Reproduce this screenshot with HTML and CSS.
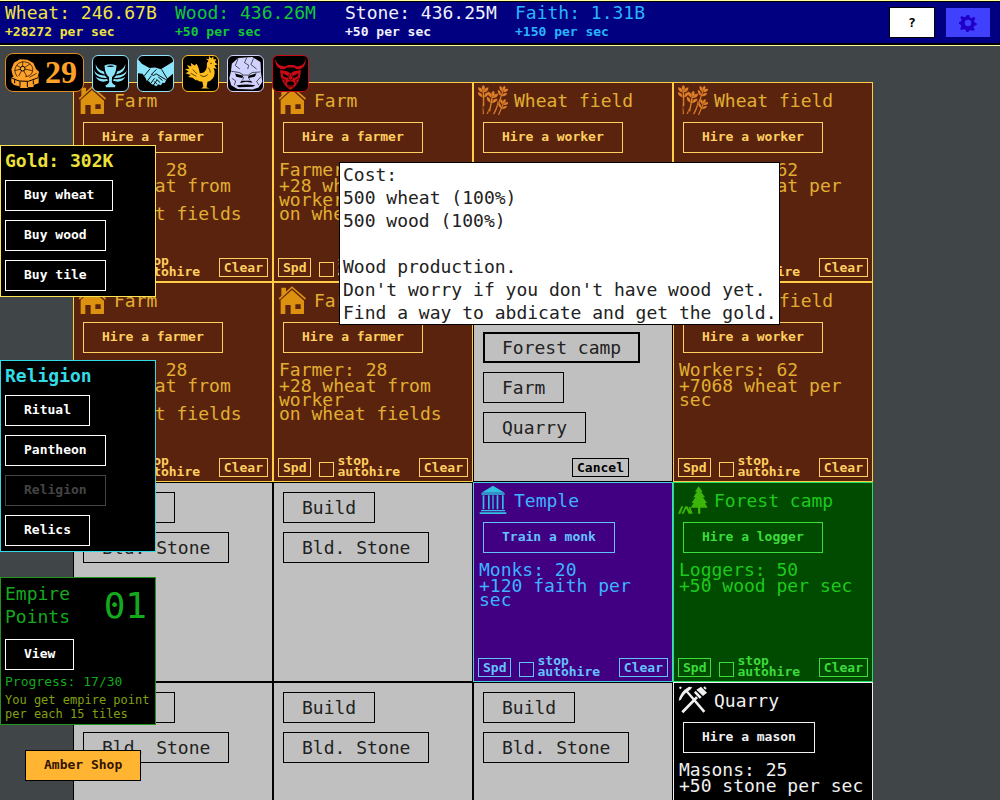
FILE: index.html
```html
<!DOCTYPE html>
<html lang="en">

<head>
    <meta charset="UTF-8">
    <meta name="viewport" content="width=device-width, initial-scale=1.0">
    <title>Empire</title>
    <link rel="stylesheet" href="styles.css">
</head>

<body>
    <!-- icons -->
    <svg class="sprites" aria-hidden="true">
        <symbol id="house" viewBox="0 0 90 90">
            <path d="M10 8h14v12L10 32zM2 40L42 4l42 36-3 4L42 10 5 44z" />
            <path d="M42 15l36 32v40H38V60H22v27H8V45zM52 58v14h16V58z" fill-rule="evenodd" />
        </symbol>
        <symbol id="ear" viewBox="0 0 30 60">
            <path d="M15 0q9 7 0 17-9-10 0-17zM0 6q14 1 13 15Q0 18 0 6zM30 6q-14 1-13 15Q30 18 30 6zM-1 20q14 1 14 15Q0 32-1 20zM31 20q-14 1-14 15Q30 32 31 20z" />
            <path d="M13 16h4l1 44h-4z" />
        </symbol>
        <symbol id="wheat" viewBox="0 0 90 90">
            <use href="#ear" x="0" y="0" width="32" height="64" />
            <path d="M14 50l4 37-4 1z" />
            <use href="#ear" x="26" y="16" width="32" height="64" transform="rotate(12 40 40)" />
            <path d="M35 66l-5 21-4-1z" />
            <use href="#ear" x="58" y="1" width="32" height="56" transform="rotate(20 74 20)" />
            <use href="#ear" x="58" y="40" width="32" height="54" transform="rotate(24 74 60)" />
            <path d="M60 42q4 20-11 46l-4-1q13-24 15-45z" />
        </symbol>
        <symbol id="temple" viewBox="0 0 90 90">
            <path d="M45 2l35 21H10zM10 25h70v4H10zM14 31h5v42h-5zM30 31h5v42h-5zM43 31h4v42h-4zM56 31h5v42h-5zM72 31h5v42h-5zM9 75h72v4H9zM5 82h80v5H5z" />
        </symbol>
        <symbol id="pine" viewBox="0 0 90 90">
            <path d="M62 4l12 16h-5l12 17h-6l12 17h-6l8 14H67v18h-7V68H38l9-14h-6l11-17h-6l11-17h-6z" />
            <path d="M10 64h6L7 86H0zM22 64h6l12 22h-8zM15 78l7-14 4 2-9 20h-7zM32 66h5l7 20h-6z" />
        </symbol>
        <symbol id="mining" viewBox="0 0 90 90">
            <path d="M2 47Q6 20 33 5l10 2-6 7Q18 24 9 44z" />
            <path d="M23 20l5-4 54 62-6 5zM10 79l44-45 6 5-44 46zM6 4l6 4-5 5-4-4zM80 4l6 6-4 4-6-6z" />
            <path d="M55 14l14-9 18 18-12 10zM53 17l18 19-6 5-17-18z" />
        </symbol>
        <symbol id="cup" viewBox="0 0 110 110">
            <path d="M36 30q19-8 38 0l-2 15q-3 15-12 21l-1 16q3 8 12 11l-2 5H41l-2-5q9-3 12-11l-1-16q-9-6-12-21z" />
            <path class="cut" d="M42 32q13-5 26 0-13 5-26 0z" />
            <path d="M8 26q7 18 26 23l3 9Q8 52 8 26zM2 44q10 18 35 17l7 8Q10 72 2 44zM8 66q13 9 36 6l4 5q-26 11-40-11zM102 26q-7 18-26 23l-3 9q29-6 29-32zM108 44q-10 18-35 17l-7 8q34 3 42-25zM102 66q-13 9-36 6l-4 5q26 11 40-11z" />
        </symbol>
        <symbol id="handshake" viewBox="0 0 110 110">
            <path d="M0 10l12 14 24 14 18-2 18 6 38-24v38L90 72l-6 13-7-1-5 8-8-3-6 6-10-5-7-2-6-8-8-2-3-9L14 56 0 54z" />
            <path class="lines" d="M38 40L20 62M58 42L42 58q7 7 15-2l30 18M74 42l18 30M29 79l13-17M38 89l14-19M48 92l12-17M60 89l-9-9M70 84l-12-11M77 77L64 66" />
        </symbol>
        <symbol id="rooster" viewBox="0 0 110 110">
            <path d="M42 78L30 68l-14-2 8-6-16-6 10-5-12-8 14-1-8-12 14 5-1-11 11 8 7-6 6 14 4 16 12-2q10-8 10-22-2-8 5-14l-8-8 9 2 1-10 7 8 6-7 1 9 9 0-5 9 9 8-10 2 7 12-10-3q8 18-2 32-7 9-17 11l-3 17 9 4H57l7-5-3-16q-12 0-19-7z" />
            <circle class="cut" cx="88" cy="23" r="2" />
            <path class="lines thin" d="M54 60q12 10 24-2M79 36q6 6 7 16M30 42l14 14M24 54l18 10" />
        </symbol>
        <symbol id="golem" viewBox="0 0 110 110">
            <path d="M12 24L32 6l44-3 26 16 2 36 4 26-12 18-18 6-48-1-20-12-6-22 5-20z" />
            <path class="cut" d="M22 55l26 7-3 7-19-4zM64 62l26-8-6 11-20 4zM42 78h30l5 6-20-3-19 4zM26 93q29-6 60-1l-8 5-44 1z" />
            <path class="lines thin" d="M10 48l26 4 12 8h16l12-8 26-2M59 5l-7 16 13 8-3 12M32 8l-9 22 14 11M80 8l-8 19 18 14M12 70l12 8-4 14M103 66L90 80l7 12M50 66l-4 9M64 66l4 9" />
        </symbol>
        <symbol id="oni" viewBox="0 0 110 110">
            <path d="M8 8Q4 32 24 42l12 0 8-6h22l8 6 12 0q20-10 16-34-2 17-14 22l-12 3-12-5H48l-12 5-12-3Q10 25 8 8z" />
            <path d="M22 44l22 4 11 6 11-6 22-4-3 22-7 18-12 16-11 6-11-6-12-16-7-18z" />
            <path class="cut" d="M30 54l18 10-4 5-12-5zM80 54L62 64l4 5 12-5zM49 80h12l6 5-3 8H46l-3-8z" />
            <path class="lines thin" d="M55 36v12M46 38l2 10M64 38l-2 10M52 56l-4 16 7 4 7-4-4-16M27 70l12 6-3 10M83 70l-12 6 3 10M43 98l12-2 12 2" />
        </symbol>
        <symbol id="amber" viewBox="0 0 90 90">
            <path d="M4 60l8-6 60-6 14 8v20l-14 4-2 7-16 1-4 3H32l-4-6-16-4-8-8z" />
            <path d="M4 34L12 14 30 4l22 1 18 10 8 18 9 8-3 12-12 8-22 6-24-1L8 52z" />
            <path class="lines" d="M5 60l22 9 28 1 30-11M30 70v16M52 71v16M70 67v12M14 64v12" />
            <path class="lines thin" d="M22 56Q8 38 20 22t34-8q16 8 14 24T46 56M38 32L20 22M38 32L38 10M38 32l22-14M38 32l30 6M38 32l12 23M38 32L26 54M38 32l-24 6M58 58l22-12" />
            <circle class="ring" cx="38" cy="32" r="7" />
        </symbol>
        <symbol id="gear" viewBox="0 0 60 60">
            <path d="M26 3h8l2 8 6 3 8-5 5 6-5 7 2 6 7 3v6l-8 2-3 6 5 7-6 5-7-4-7 3-2 5h-6l-3-8-7-3-7 4-4-5 4-7-3-7-7-2v-6l8-2 3-6-5-7 5-5 8 4 6-3zM30 19a11 11 0 1 0 0 22 11 11 0 1 0 0-22z" fill-rule="evenodd" />
        </symbol>
    </svg>

    <header class="topbar">
        <div class="resources">
            <div class="resource wheat">Wheat: 246.67B<small>+28272 per sec</small></div>
            <div class="resource wood">Wood: 436.26M<small>+50 per sec</small></div>
            <div class="resource stone">Stone: 436.25M<small>+50 per sec</small></div>
            <div class="resource faith">Faith: 1.31B<small>+150 per sec</small></div>
        </div>
        <button class="help">?</button>
        <button class="settings" aria-label="Settings"><svg><use href="#gear" /></svg></button>
    </header>

    <div class="medals">
        <div class="medal coins"><svg><use href="#amber" /></svg>29</div>
        <div class="medal ice"><svg><use href="#cup" /></svg></div>
        <div class="medal ice"><svg><use href="#handshake" /></svg></div>
        <div class="medal gold"><svg><use href="#rooster" /></svg></div>
        <div class="medal pale"><svg><use href="#golem" /></svg></div>
        <div class="medal red"><svg><use href="#oni" /></svg></div>
    </div>

    <aside class="side">
        <section class="panel panel-gold">
            <h2>Gold: 302K</h2>
            <button>Buy wheat</button>
            <button>Buy wood</button>
            <button>Buy tile</button>
        </section>
        <section class="panel panel-religion">
            <h2>Religion</h2>
            <button>Ritual</button>
            <button>Pantheon</button>
            <button disabled>Religion</button>
            <button>Relics</button>
        </section>
        <section class="panel panel-empire">
            <div class="points">
                <h2>Empire<br>Points</h2>
                <span class="count">01</span>
            </div>
            <button>View</button>
            <p class="progress">Progress: 17/30</p>
            <p class="hint">You get empire point<br>per each 15 tiles</p>
        </section>
        <button class="shop">Amber Shop</button>
    </aside>

    <main class="board">
        <div class="tile farm">
            <h3><svg><use href="#house" /></svg>Farm</h3>
            <button>Hire a farmer</button>
            <p>Farmer: 28</p>
            <p>+28 wheat from worker<br>on wheat fields</p>
            <div class="foot">
                <button>Spd</button>
                <label><input type="checkbox"><span>stop<br>autohire</span></label>
                <button>Clear</button>
            </div>
        </div>
        <div class="tile farm">
            <h3><svg><use href="#house" /></svg>Farm</h3>
            <button>Hire a farmer</button>
            <p>Farmer: 28</p>
            <p>+28 wheat from worker<br>on wheat fields</p>
            <div class="foot">
                <button>Spd</button>
                <label><input type="checkbox"><span>stop<br>autohire</span></label>
                <button>Clear</button>
            </div>
        </div>
        <div class="tile farm field">
            <h3><svg><use href="#wheat" /></svg>Wheat field</h3>
            <button>Hire a worker</button>
            <p>Workers: 62</p>
            <p>+7068 wheat per sec</p>
            <div class="foot">
                <button>Spd</button>
                <label><input type="checkbox"><span>stop<br>autohire</span></label>
                <button>Clear</button>
            </div>
        </div>
        <div class="tile farm field">
            <h3><svg><use href="#wheat" /></svg>Wheat field</h3>
            <button>Hire a worker</button>
            <p>Workers: 62</p>
            <p>+7068 wheat per sec</p>
            <div class="foot">
                <button>Spd</button>
                <label><input type="checkbox"><span>stop<br>autohire</span></label>
                <button>Clear</button>
            </div>
        </div>

        <div class="tile farm">
            <h3><svg><use href="#house" /></svg>Farm</h3>
            <button>Hire a farmer</button>
            <p>Farmer: 28</p>
            <p>+28 wheat from worker<br>on wheat fields</p>
            <div class="foot">
                <button>Spd</button>
                <label><input type="checkbox"><span>stop<br>autohire</span></label>
                <button>Clear</button>
            </div>
        </div>
        <div class="tile farm">
            <h3><svg><use href="#house" /></svg>Farm</h3>
            <button>Hire a farmer</button>
            <p>Farmer: 28</p>
            <p>+28 wheat from worker<br>on wheat fields</p>
            <div class="foot">
                <button>Spd</button>
                <label><input type="checkbox"><span>stop<br>autohire</span></label>
                <button>Clear</button>
            </div>
        </div>
        <div class="tile empty choosing">
            <button class="active">Forest camp</button>
            <button>Farm</button>
            <button>Quarry</button>
            <div class="foot">
                <button class="cancel">Cancel</button>
            </div>
        </div>
        <div class="tile farm field">
            <h3><svg><use href="#wheat" /></svg>Wheat field</h3>
            <button>Hire a worker</button>
            <p>Workers: 62</p>
            <p>+7068 wheat per sec</p>
            <div class="foot">
                <button>Spd</button>
                <label><input type="checkbox"><span>stop<br>autohire</span></label>
                <button>Clear</button>
            </div>
        </div>

        <div class="tile empty">
            <button>Build</button>
            <button>Bld. Stone</button>
        </div>
        <div class="tile empty">
            <button>Build</button>
            <button>Bld. Stone</button>
        </div>
        <div class="tile temple">
            <h3><svg><use href="#temple" /></svg>Temple</h3>
            <button>Train a monk</button>
            <p>Monks: 20</p>
            <p>+120 faith per sec</p>
            <div class="foot">
                <button>Spd</button>
                <label><input type="checkbox"><span>stop<br>autohire</span></label>
                <button>Clear</button>
            </div>
        </div>
        <div class="tile forest">
            <h3><svg><use href="#pine" /></svg>Forest camp</h3>
            <button>Hire a logger</button>
            <p>Loggers: 50</p>
            <p>+50 wood per sec</p>
            <div class="foot">
                <button>Spd</button>
                <label><input type="checkbox"><span>stop<br>autohire</span></label>
                <button>Clear</button>
            </div>
        </div>

        <div class="tile empty">
            <button>Build</button>
            <button>Bld. Stone</button>
        </div>
        <div class="tile empty">
            <button>Build</button>
            <button>Bld. Stone</button>
        </div>
        <div class="tile empty">
            <button>Build</button>
            <button>Bld. Stone</button>
        </div>
        <div class="tile quarry">
            <h3><svg><use href="#mining" /></svg>Quarry</h3>
            <button>Hire a mason</button>
            <p>Masons: 25</p>
            <p>+50 stone per sec</p>
        </div>
    </main>

    <div class="tooltip" role="tooltip">Cost:<br>500 wheat (100%)<br>500 wood (100%)<br><br>Wood production.<br>Don't worry if you don't have wood yet.<br>Find a way to abdicate and get the gold.</div>
</body>

</html>
```
FILE: styles.css
```css
* {
    box-sizing: border-box;
    margin: 0;
    padding: 0;
}

body {
    background-color: #404547;
    font-family: "DejaVu Sans Mono", monospace;
    font-size: 18px;
    line-height: 23px;
    height: 100vh;
    overflow: hidden;
}

button {
    height: 31px;
    padding: 0 18px 2px;
    border: 1px solid currentColor;
    background: none;
    color: #fff;
    font-family: inherit;
    font-size: 13px;
    font-weight: bold;
    cursor: pointer;
}

h2,
h3 {
    font-size: 18px;
    font-weight: normal;
}

svg {
    fill: currentColor;
    flex: none;
}

.sprites {
    position: absolute;
    width: 0;
    height: 0;
}

.cut {
    fill: #000;
}

.lines,
.ring {
    fill: none;
    stroke: #000;
    stroke-width: 3px;
}

.thin {
    stroke-width: 2px;
}

.ring {
    fill: #ffb030;
}

/* top bar */

.topbar {
    display: flex;
    align-items: flex-start;
    height: 46px;
    padding: 0 9px 0 5px;
    background-color: #000080;
    border: solid #ffffa0;
    border-width: 1px 0;
    box-shadow: inset 0 1px #000, inset 0 -2px #000;
    position: relative;
    z-index: 3;
}

.resources {
    display: grid;
    grid-template-columns: repeat(4, 170px);
    flex: 1;
}

.resource small {
    display: block;
    font-size: 13px;
    font-weight: bold;
    line-height: 16px;
}

.resource.wheat {
    color: #f0e442;
}

.resource.wood {
    color: #14c832;
}

.resource.stone {
    color: #f0f0ff;
}

.resource.faith {
    color: #28b4ff;
}

.help,
.settings {
    width: 46px;
    height: 31px;
    margin-top: 6px;
    padding: 0;
    border-color: #000;
}

.help {
    background-color: #fff;
    color: #000;
}

.settings {
    margin-left: 10px;
    background-color: #4040ff;
    border-color: #000080;
    color: #2000c8;
}

.settings svg {
    display: block;
    width: 18px;
    height: 18px;
    margin: 0 auto;
}

/* medals */

.medals {
    display: flex;
    align-items: flex-end;
    gap: 8px;
    position: absolute;
    top: 53px;
    left: 5px;
    z-index: 2;
}

.medal {
    width: 37px;
    height: 37px;
    border: 1px solid currentColor;
    border-radius: 6px;
    background-color: #000;
    overflow: hidden;
}

.medal svg {
    display: block;
    width: 35px;
    height: 35px;
}

.coins {
    display: flex;
    align-items: center;
    gap: 5px;
    width: 79px;
    height: 39px;
    padding-left: 4px;
    border-color: #e08a20;
    border-radius: 8px;
    color: #ffa028;
    font-family: "Liberation Serif", serif;
    font-size: 32px;
    font-weight: bold;
}

.coins svg {
    width: 30px;
    height: 30px;
}

.ice {
    color: #8ce4fa;
}

.gold {
    color: #ffbe1e;
}

.pale {
    color: #d2d2ff;
}

.red {
    color: #c80a14;
}

/* side panels */

.side {
    display: flex;
    flex-direction: column;
    align-items: flex-start;
    gap: 25px;
    position: absolute;
    top: 145px;
    left: 0;
    z-index: 1;
}

.panel {
    display: flex;
    flex-direction: column;
    align-items: flex-start;
    gap: 9px;
    width: 156px;
    padding: 4px 4px 5px;
    border: 1px solid currentColor;
    background-color: #000;
}

.panel h2 {
    font-weight: bold;
    line-height: 21px;
}

.panel button {
    color: #fff;
}

.panel button:disabled {
    color: #444;
}

.panel-gold {
    margin-bottom: 38px;
    border-color: #ffe650;
    color: #ebe13c;
}

.panel-religion {
    color: #32dce6;
}

.panel-empire {
    gap: 4px;
    padding-bottom: 3px;
    border-color: #1e961e;
    color: #14aa1e;
}

.panel-empire h2 {
    font-weight: normal;
    line-height: 23px;
}

.points {
    display: flex;
    justify-content: space-between;
    align-items: center;
    width: 100%;
    padding: 0 4px 7px 0;
}

.count {
    font-size: 36px;
}

.progress {
    font-size: 13px;
    line-height: 15px;
}

.hint {
    color: #82a014;
    font-size: 12px;
    line-height: 14px;
}

.shop {
    margin-left: 25px;
    background-color: #ffb432;
    border-color: #000;
    color: #321400;
}

/* board */

.board {
    display: grid;
    grid-template-columns: repeat(4, 1fr);
    grid-auto-rows: minmax(200px, auto);
    margin: 36px 127px 0 73px;
}

.tile {
    display: flex;
    flex-direction: column;
    align-items: flex-start;
    padding: 3px 4px 4px;
    border: 1px solid currentColor;
}

.tile h3 {
    display: flex;
    align-items: center;
    gap: 6px;
    height: 28px;
}

.tile h3 svg {
    width: 30px;
    height: 30px;
}

.tile button {
    margin-left: 5px;
    color: inherit;
}

.tile h3 + button {
    margin-top: 8px;
    margin-bottom: 10px;
}

.tile p {
    padding: 0 1px;
    line-height: 14px;
}

.tile p + p {
    margin-top: 2px;
}

.foot {
    display: flex;
    align-items: flex-end;
    width: 100%;
    margin-top: auto;
}

.foot label {
    display: flex;
    align-items: flex-end;
    gap: 3px;
    margin-left: 8px;
    font-size: 13px;
    font-weight: bold;
    line-height: 11px;
}

.foot input {
    appearance: none;
    width: 15px;
    height: 15px;
    border: 1px solid currentColor;
    color: inherit;
}

.foot button {
    height: 19px;
    margin-left: 0;
    padding: 0 4px;
}

.foot button:last-child {
    margin-left: auto;
}

.farm {
    background-color: #5a230e;
    border-color: #ffcd46;
    color: #e1af32;
}

.farm button,
.farm label {
    color: #ffcf60;
}

.farm h3 svg {
    color: #dc910f;
}

.field h3 svg {
    color: #dc7d28;
}

.temple {
    background-color: #410082;
    border-color: #46d2e6;
    color: #3cb4ff;
}

.temple button,
.temple label {
    color: #64c3ff;
}

.temple h3 svg {
    color: #32bee1;
}

.forest {
    background-color: #004b00;
    border-color: #28e164;
    color: #1ec81e;
}

.forest button,
.forest label {
    color: #3cdc3c;
}

.forest h3 svg {
    color: #3cb40a;
}

.quarry {
    background-color: #000;
    color: #f0f0f0;
}

.empty {
    gap: 9px;
    padding-top: 9px;
    background-color: #c0c0c0;
    border-color: #000;
    color: #000;
}

.empty > button {
    padding-bottom: 0;
    border-color: #000;
    color: #222;
    font-size: 18px;
    font-weight: normal;
}

.empty > .active {
    padding: 0 17px;
    border-width: 2px;
}

.choosing {
    padding-top: 49px;
}

.foot .cancel {
    margin-right: 39px;
}

/* tooltip */

.tooltip {
    position: absolute;
    top: 162px;
    left: 339px;
    z-index: 4;
    padding: 0 3px;
    border: 1px solid #000;
    background-color: #fff;
    color: #222;
    white-space: nowrap;
}
```
